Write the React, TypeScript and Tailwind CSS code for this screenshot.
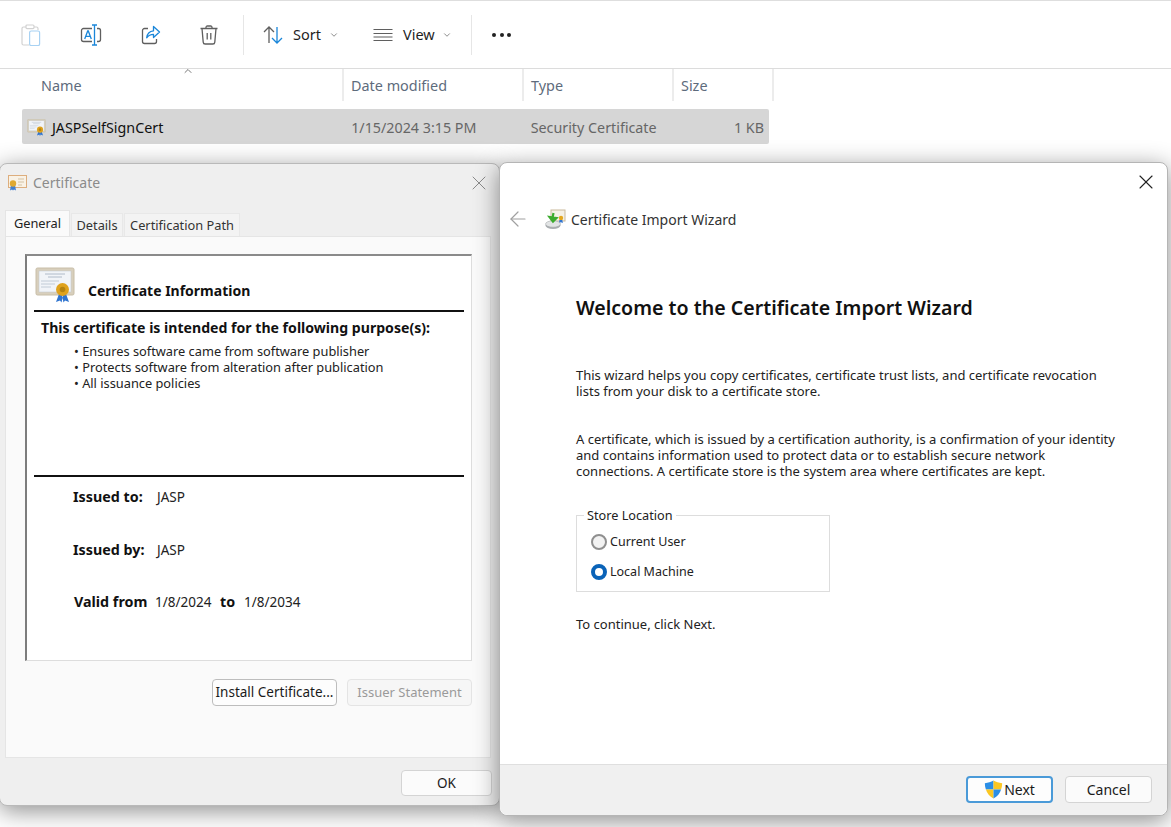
import { X, ArrowLeft, ChevronDown, ChevronUp } from 'lucide-react';

const CertIcon = ({ className }: { className?: string }) => (
  <svg viewBox="0 0 40 36" className={className}>
    <rect x="1" y="1" width="38" height="27" rx="1.500" fill="#d8cfbc" stroke="#c8bea8" strokeWidth="1" />
    <rect x="4" y="4" width="32" height="21" fill="#f1f4f8" stroke="#bfc6cf" strokeWidth="0.500" />
    <path d="M10 7h20M13 10h14" stroke="#a9b4c4" strokeWidth="0.900" />
    <path d="M6 14h18M6 17h14M6 20h10" stroke="#bcc6d3" strokeWidth="0.900" />
    <path d="M24 27l-3 8 4-1.500 1.500 2 1.500-7zM31 27l3 8-4-1.500-1.500 2-1.500-7z" fill="#2f74d0" />
    <circle cx="27.500" cy="22.500" r="6.500" fill="#dfa21d" />
    <circle cx="27.500" cy="22.500" r="2.800" fill="#b58310" />
  </svg>
);

const SmallCert = ({ className }: { className?: string }) => (
  <svg viewBox="0 0 19 16" className={className}>
    <rect x="0.500" y="0.500" width="18" height="12" fill="#fbf3e6" stroke="#dca872" />
    <path d="M10 4h6M10 7h6M10 10h4" stroke="#d2bd9c" />
    <path d="M3 10l-1 5.500 2-1 1 1 1-1 2 1-1-5.500z" fill="#2f74d0" />
    <circle cx="5" cy="8.500" r="3.200" fill="#dfa21d" />
  </svg>
);

const WizardIcon = ({ className }: { className?: string }) => (
  <svg viewBox="0 0 21 21" className={className}>
    <rect x="6" y="1" width="14" height="11" fill="#f5f1e6" stroke="#c9b99c" />
    <circle cx="16" cy="9" r="2.200" fill="#e3a71f" />
    <path d="M14.500 11l-.6 3 2-.8 2 .8-.6-3z" fill="#2f74d0" />
    <ellipse cx="8" cy="16.500" rx="7.500" ry="3.500" fill="#a9adb0" />
    <ellipse cx="8" cy="15" rx="7.500" ry="3.200" fill="#e2e4e5" stroke="#9a9ea1" strokeWidth="0.500" />
    <path d="M8.500 4L7.500 9M4.500 8L8 12.500l3.500-3.500z" stroke="#3cab2d" strokeWidth="2.200" fill="#3cab2d" />
  </svg>
);

const ClipboardIcon = () => (
  <svg viewBox="0 0 20 22" className="h-[22px] w-5" fill="none">
    <path d="M5 3H2.500A1.500 1.500 0 0 0 1 4.500v15A1.500 1.500 0 0 0 2.500 21H8M13 3h2.500A1.500 1.500 0 0 1 17 4.500V6" stroke="#d2d2d2" strokeWidth="1.200" />
    <rect x="5" y="1" width="8" height="3.600" rx="1" stroke="#d2d2d2" strokeWidth="1.200" />
    <rect x="8.600" y="7" width="10" height="14.500" rx="1.600" stroke="#a8d2f3" strokeWidth="1.200" />
  </svg>
);

const RenameIcon = () => (
  <svg viewBox="0 0 22 22" className="h-[22px] w-[22px]" fill="none">
    <path d="M12 4.500H3.500a2 2 0 0 0-2 2v9a2 2 0 0 0 2 2H12M17 4.500h1.500a2 2 0 0 1 2 2v9a2 2 0 0 1-2 2H17" stroke="#5f5f5f" strokeWidth="1.300" />
    <path d="M4.700 15L7.700 7h.6l3 8M5.800 12.300h4.400" stroke="#1a86d9" strokeWidth="1.300" />
    <path d="M12 1h5M12 21h5M14.500 1v20" stroke="#1a86d9" strokeWidth="1.300" />
  </svg>
);

const ShareIcon = () => (
  <svg viewBox="0 0 20 20" className="h-5 w-5" fill="none">
    <path d="M7 3.500H3.500a2 2 0 0 0-2 2v11a2 2 0 0 0 2 2h10a2 2 0 0 0 2-2V14" stroke="#5f5f5f" strokeWidth="1.300" />
    <path d="M12.500 1.500L18.500 7l-6 5.500V9.300c-3.200 0-5 1-6.800 3.500.4-4 2.800-6.600 6.800-7z" stroke="#1a86d9" strokeWidth="1.300" strokeLinejoin="round" />
  </svg>
);

const TrashIcon = () => (
  <svg viewBox="0 0 18 20" className="h-5 w-[18px]" fill="none" stroke="#5f5f5f" strokeWidth="1.300">
    <path d="M0.500 3.500h17M6 3.500V2.300A1.300 1.300 0 0 1 7.300 1h3.400A1.300 1.300 0 0 1 12 2.300v1.200" />
    <path d="M2 3.500l1.200 13.600A2 2 0 0 0 5.200 19h7.600a2 2 0 0 0 2-1.900L16 3.500" />
    <path d="M7.200 8v6.500M10.800 8v6.500" />
  </svg>
);

const SortIcon = () => (
  <svg viewBox="0 0 20 18" className="h-[18px] w-5" fill="none" strokeWidth="1.300">
    <path d="M6 17V1M1 6l5-5 5 5" stroke="#5f5f5f" />
    <path d="M14 1v16M9 12l5 5 5-5" stroke="#1a86d9" />
  </svg>
);

const ViewIcon = () => (
  <svg viewBox="0 0 20 14" className="h-3.500 w-5" fill="none" stroke="#5f5f5f" strokeWidth="1.100">
    <path d="M0.500 1.500h19M0.500 5.500h19M0.500 9h19M0.500 12.500h19" />
  </svg>
);

const ShieldIcon = () => (
  <svg viewBox="0 0 18 18" className="h-[19px] w-[19px]">
    <path d="M9 0.500C6.500 2 4 2.800 0.800 3c0 2.200.3 4.200 1 6H9z" fill="#2b8ee6" />
    <path d="M9 0.500c2.500 1.500 5 2.300 8.200 2.500 0 2.200-.3 4.200-1 6H9z" fill="#fbc723" />
    <path d="M1.800 9C3 12.800 5.200 15.500 9 17.500V9z" fill="#fbc723" />
    <path d="M9 9h7.200C15 12.800 12.800 15.500 9 17.500z" fill="#2b8ee6" />
  </svg>
);

const Column = ({ label, width }: { label: string; width: string }) => (
  <div className={`${width} flex h-[32px] items-center border-r-2 border-[#ececec] pl-[7px] pt-[2px] text-[14.400px] text-[#5e6b7c]`}>
    {label}
  </div>
);

const Explorer = () => (
  <div className="h-[164px] bg-white">
    {/* Toolbar */}
    <div className="flex h-[69px] items-center border-y-[1px] border-t-[#dedede] border-b-[#dcdcdc] pt-[1px]">
      <div className="flex h-[40px] w-[244px] items-center gap-[39px] border-r border-[#e6e6e6] pl-[21px]">
        <ClipboardIcon />
        <RenameIcon />
        <ShareIcon />
        <TrashIcon />
      </div>
      <div className="flex h-[40px] w-[228px] items-center border-r border-[#e6e6e6] pl-[19px]">
        <SortIcon />
        <span className="ml-[10px] text-[14.500px] text-[#1f1f1f]">Sort</span>
        <ChevronDown className="ml-[8px] h-[10px] w-[10px] text-[#777]" />
        <div className="ml-[34px]"><ViewIcon /></div>
        <span className="ml-[10px] text-[14.500px] text-[#1f1f1f]">View</span>
        <ChevronDown className="ml-[7px] h-[10px] w-[10px] text-[#777]" />
      </div>
      <div className="ml-[20px] flex gap-[3.500px]">
        <span className="h-[4px] w-[4px] rounded-full bg-[#222]" />
        <span className="h-[4px] w-[4px] rounded-full bg-[#222]" />
        <span className="h-[4px] w-[4px] rounded-full bg-[#222]" />
      </div>
    </div>
    {/* Column headers */}
    <div className="relative flex">
      <ChevronUp className="absolute left-[182px] top-[-4px] h-3 w-3 text-[#777]" />
      <div className="flex h-[32px] w-[344px] items-center border-r-2 border-[#ececec] pl-[41px] pt-[2px] text-[14.400px] text-[#5e6b7c]">Name</div>
      <Column label="Date modified" width="w-[180px]" />
      <Column label="Type" width="w-[150px]" />
      <Column label="Size" width="w-[100px]" />
    </div>
    {/* Selected file */}
    <div className="ml-[22px] mt-[8px] flex h-[35px] w-[747px] items-center rounded-[2px] bg-[#d6d6d6] pt-[2px] text-[14.300px]">
      <CertIcon className="ml-[5px] h-[17px] w-[19px]" />
      <span className="ml-[6px] w-[300px] text-[#111]">JASPSelfSignCert</span>
      <span className="w-[180px] text-[#666]">1/15/2024 3:15 PM</span>
      <span className="w-[149px] text-[#666]">Security Certificate</span>
      <span className="w-[90px] pr-[5px] text-right text-[#666]">1 KB</span>
    </div>
  </div>
);

const Tab = ({ label, active, width }: { label: string; active?: boolean; width: string }) => (
  <div
    className={
      active
        ? `${width} flex h-[26px] items-center justify-center border border-b-0 border-[#e5e5e5] bg-[#fafafa] text-[12.800px] text-[#222]`
        : `${width} flex h-[23px] items-center justify-center border border-b-0 border-[#e8e8e8] bg-[#f3f3f3] pt-[1px] text-[12.800px] text-[#333]`
    }
  >
    {label}
  </div>
);

const CertificateWindow = () => (
  <div className="absolute left-[-1px] top-[163px] flex h-[643px] w-[501px] flex-col rounded-[8px] border border-[#b9b9b9] bg-[#efefef] shadow-[0_5px_24px_rgba(0,0,0,0.45)]">
    {/* Title bar */}
    <div className="flex h-[37px] shrink-0 items-center pl-[8px] pr-[8px]">
      <SmallCert className="h-4 w-[19px] opacity-90" />
      <span className="ml-[6px] text-[14px] text-[#8b8b8b]">Certificate</span>
      <X className="ml-auto h-6 w-6 text-[#8a8a8a]" strokeWidth={1} />
    </div>
    {/* Tabs */}
    <div className="ml-[5px] mt-[9px] flex h-[26px] shrink-0 items-end gap-[1px]">
      <Tab label="General" active width="w-[65px]" />
      <Tab label="Details" width="w-[52px]" />
      <Tab label="Certification Path" width="w-[116px]" />
    </div>
    {/* Tab page */}
    <div className="ml-[5px] flex h-[522px] w-[486px] shrink-0 flex-col border border-[#e5e5e5] bg-[#fafafa] pl-[19px] pt-[17px]">
      <div className="h-[407px] w-[447px] border-y border-l-2 border-r border-t-2 border-l-[#7d7d7d] border-t-[#8a8a8a] border-r-[#dddddd] border-b-[#dddddd] bg-white px-[7px] text-[13.500px] leading-[16px] text-[#222]">
        <div className="flex h-[56px] items-end border-b-2 border-[#111] pb-[7px] pl-[1px]">
          <CertIcon className="h-9 w-10" />
          <span className="ml-[13px] pb-[4px] text-[14px] font-bold leading-[16px] text-[#111]">Certificate Information</span>
        </div>
        <p className="ml-[7px] mt-[7px] text-[14.100px] font-bold leading-[18px] text-[#111]">This certificate is intended for the following purpose(s):</p>
        <ul className="mt-[6px] h-[134px] border-b-2 border-[#111] pl-[40px] text-[12.800px]">
          <li>• Ensures software came from software publisher</li>
          <li>• Protects software from alteration after publication</li>
          <li>• All issuance policies</li>
        </ul>
        <div className="mt-[12px] flex flex-col gap-[37px] pl-[39px]">
          <div className="flex">
            <b className="w-[84px] text-[14.300px] font-bold text-[#111]">Issued to:</b>
            <span>JASP</span>
          </div>
          <div className="flex">
            <b className="w-[84px] text-[14.300px] font-bold text-[#111]">Issued by:</b>
            <span>JASP</span>
          </div>
          <div className="-mt-[1px] flex pl-[1px]">
            <b className="w-[81px] text-[14.300px] font-bold text-[#111]">Valid from</b>
            <span className="w-[65px]">1/8/2024</span>
            <b className="w-[24px] text-[14.300px] font-bold text-[#111]">to</b>
            <span>1/8/2034</span>
          </div>
        </div>
      </div>
      <div className="mt-[18px] flex w-[447px] justify-end gap-[10px]">
        <div className="flex h-[27px] w-[125px] items-center justify-center rounded-[4px] border border-[#bdbdbd] bg-[#fdfdfd] text-[13.500px] text-[#1a1a1a]">Install Certificate...</div>
        <div className="flex h-[27px] w-[125px] items-center justify-center rounded-[4px] border border-[#e4e4e4] bg-[#f6f6f6] text-[13px] text-[#9a9a9a]">Issuer Statement</div>
      </div>
    </div>
    {/* Footer */}
    <div className="flex flex-1 items-start justify-end pr-[7px] pt-[12px]">
      <div className="flex h-[26px] w-[91px] items-center justify-center rounded-[4px] border border-[#d4d4d4] bg-[#fbfbfb] text-[13.500px] text-[#1a1a1a]">OK</div>
    </div>
  </div>
);

const Radio = ({ label, checked }: { label: string; checked?: boolean }) => (
  <div className="flex h-[30px] items-center">
    <span
      className={
        checked
          ? 'h-4 w-4 rounded-full border-[4px] border-[#0a63b8] bg-white'
          : 'h-4 w-4 rounded-full border-2 border-[#8f8f8f] bg-[#f2f2f2]'
      }
    />
    <span className="ml-[3px] text-[12.500px] text-[#222]">{label}</span>
  </div>
);

const WizardWindow = () => (
  <div className="absolute left-[499px] top-[162px] flex h-[654px] w-[669px] flex-col rounded-[8px] border border-[#b5b5b5] bg-white shadow-[0_5px_24px_rgba(0,0,0,0.45)]">
    <div className="flex h-[37px] shrink-0 items-center justify-end pr-[9px]">
      <X className="h-6 w-6 text-[#222]" strokeWidth={1.100} />
    </div>
    <div className="flex h-[38px] shrink-0 items-center pl-[6px]">
      <ArrowLeft className="h-[24px] w-[24px] text-[#a0a0a0]" strokeWidth={1.200} />
      <WizardIcon className="ml-[15px] h-[21px] w-[21px]" />
      <span className="ml-[5px] text-[14px] text-[#333]">Certificate Import Wizard</span>
    </div>
    <div className="flex-1 pl-[76px] pr-[50px] text-[13px] leading-[16px] text-[#222]">
      <h1 className="mt-[56px] text-[19.600px] font-semibold leading-[28px] text-[#111]">Welcome to the Certificate Import Wizard</h1>
      <p className="mt-[45px]">This wizard helps you copy certificates, certificate trust lists, and certificate revocation<br />lists from your disk to a certificate store.</p>
      <p className="mt-[32px]">A certificate, which is issued by a certification authority, is a confirmation of your identity<br />and contains information used to protect data or to establish secure network<br />connections. A certificate store is the system area where certificates are kept.</p>
      <fieldset className="mt-[28px] h-[85px] w-[254px] border border-[#dddddd] pl-[14px]">
        <legend className="ml-[-7px] px-[3px] text-[12.700px]">Store Location</legend>
        <div className="mt-[4px]"><Radio label="Current User" /><Radio label="Local Machine" checked /></div>
      </fieldset>
      <p className="mt-[24px]">To continue, click Next.</p>
    </div>
    <div className="flex h-[51px] shrink-0 items-center justify-end gap-[12px] rounded-b-[8px] border-t border-[#dfdfdf] bg-[#f0f0f0] pb-[2px] pr-[15px]">
      <div className="flex h-[27px] w-[87px] items-center justify-center gap-[1px] rounded-[4px] border-2 border-[#4a9ad8] bg-[#fdfdfd] text-[14px] text-[#1a1a1a]">
        <ShieldIcon />
        Next
      </div>
      <div className="flex h-[27px] w-[87px] items-center justify-center rounded-[4px] border border-[#d4d4d4] bg-[#fbfbfb] text-[14px] text-[#1a1a1a]">Cancel</div>
    </div>
  </div>
);

export default function App() {
  return (
    <div className="relative h-[827px] w-[1171px] overflow-hidden bg-white font-['Noto_Sans',sans-serif]">
      <Explorer />
      <CertificateWindow />
      <WizardWindow />
    </div>
  );
}
